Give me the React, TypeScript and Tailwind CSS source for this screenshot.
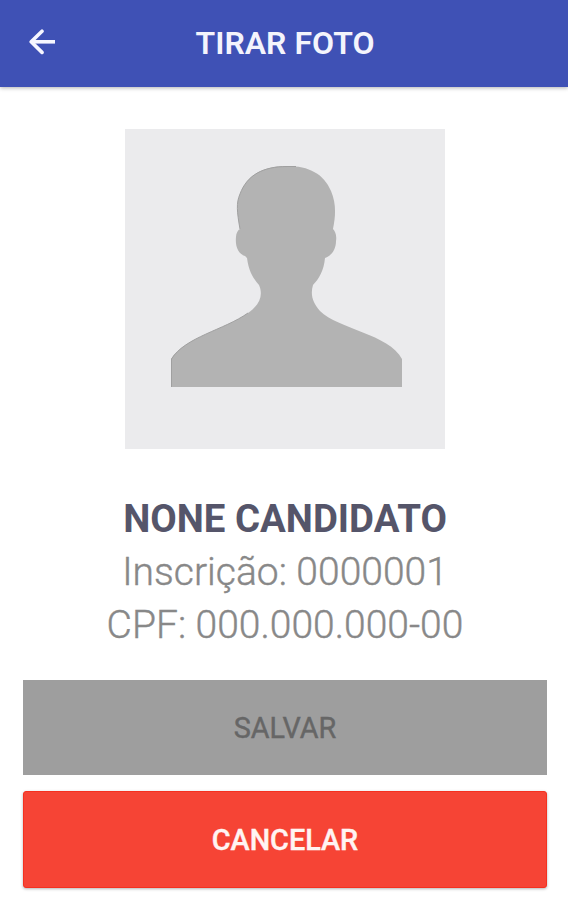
import type { ReactNode } from "react";

function ArrowBackIcon() {
  return (
    <svg viewBox="0 0 28 28" className="h-7 w-7" fill="none" stroke="#f6f6ff" strokeWidth="3.6">
      <path d="M27 12.8H5" />
      <path d="M14 2.2L3.2 12.8L14 23.4" strokeLinecap="round" strokeLinejoin="round" />
    </svg>
  );
}

function PhotoPlaceholder() {
  return (
    <svg viewBox="0 0 320 320" className="h-80 w-80 bg-[#ebebed]">
      <path
        d="M46 258V230C60 208 99 201 123 184C136 175 138 165 134 156C129 150 124 144 122 129C121 128 121 128 120 127C113 125 110 117 111 108C111 104 113 101 115 100C112 83 111 74 115 65C122 46 138 37 162 37C184 37 199 45 206 62C211 74 211 85 208 100C210 102 212 106 211 112C211 119 208 126 200 129C199 141 194 150 188 156C185 166 188 174 195 182C213 200 264 205 277 230V258Z"
        fill="#b3b3b3"
      />
      <path
        d="M46.5 258V230C60 208 99 201 123 184M115 100C112 83 111 74 115 65C122 46 138 37.5 162 37.5H171"
        fill="none"
        stroke="#a0a0a0"
      />
    </svg>
  );
}

function ActionButton({ className, children }: { className: string; children: ReactNode }) {
  return (
    <button type="button" className={`w-full text-[28.8px] ${className}`}>
      {children}
    </button>
  );
}

export default function App() {
  return (
    <div className="flex h-[900px] w-full flex-col bg-white font-['Roboto',sans-serif]">
      <header className="grid h-[87px] shrink-0 grid-cols-[28px_1fr_28px] items-center bg-[#3f51b5] pr-[26px] pb-0.5 pl-7 shadow-[0_1px_4px_rgba(0,0,0,0.3)]">
        <button type="button" aria-label="Voltar">
          <ArrowBackIcon />
        </button>
        <h1 className="text-center text-[32px] font-semibold text-[#f4f4fc]">TIRAR FOTO</h1>
      </header>

      <main className="flex flex-col items-center pt-[42px] pr-[21px] pl-[23px]">
        <PhotoPlaceholder />
        <div className="mt-[43px] text-center text-[39px] leading-[53px] font-light text-[#888888]">
          <h2 className="mb-px text-[38.4px] font-bold text-[#55556a]">NONE CANDIDATO</h2>
          <p className="[-webkit-text-stroke:0.4px_#888888]">Inscrição: 0000001</p>
          <p className="[-webkit-text-stroke:0.4px_#888888]">CPF: 000.000.000-00</p>
        </div>
        <div className="mt-[28px] flex w-full flex-col gap-4">
          <ActionButton className="h-[95px] bg-[#9e9e9e] pt-[3px] font-normal text-[#666666] [-webkit-text-stroke:0.4px_#666666]">
            SALVAR
          </ActionButton>
          <ActionButton className="h-[97px] rounded-[3px] border border-[#f5301f] bg-[#f64435] pt-[2px] font-medium text-[#fff4f2] shadow-[0_1px_3px_rgba(0,0,0,0.3)] [-webkit-text-stroke:0.4px_#fff4f2]">
            CANCELAR
          </ActionButton>
        </div>
      </main>
    </div>
  );
}
